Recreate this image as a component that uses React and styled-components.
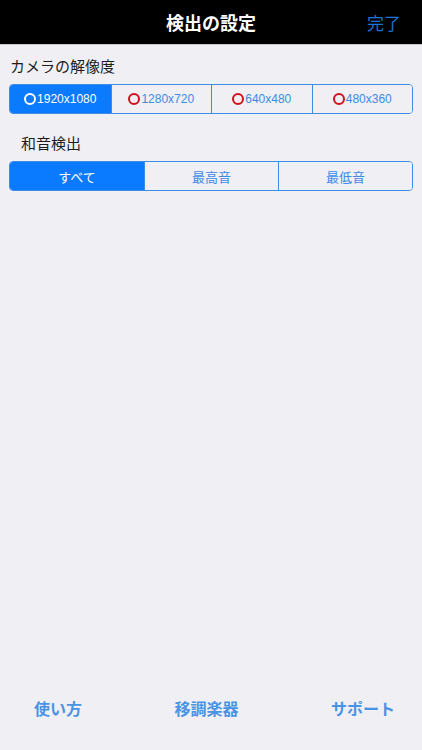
import React, { useState } from 'react';
import styled, { createGlobalStyle } from 'styled-components';

const GlobalStyle = createGlobalStyle`
    html, body {
        margin: 0;
        padding: 0;
        background: #efeff4;
    }

    body {
        font-family: "Liberation Sans", "Noto Sans CJK JP", sans-serif;
    }
`

const Page = styled.div`
    display: flex;
    flex-direction: column;
    width: 422px;
    height: 750px;
    background: #efeff4;
`

const NavBar = styled.header`
    display: grid;
    grid-template-columns: 1fr auto 1fr;
    align-items: center;
    height: 44px;
    background: #000;
    border-bottom: 1px solid #c8c8cc;
    flex-shrink: 0;
`

const NavTitle = styled.h1`
    grid-column: 2;
    margin: 0;
    font-family: "Noto Sans CJK JP", sans-serif;
    font-size: 18px;
    font-weight: 700;
    color: #fff;
`

const NavAction = styled.button`
    justify-self: end;
    margin-right: 21px;
    padding: 0;
    border: 0;
    background: none;
    font-family: "Noto Sans CJK JP", sans-serif;
    font-size: 17px;
    color: #1f72d6;
`

const Content = styled.main`
    flex: 1;
    display: flex;
    flex-direction: column;
    padding: 0 9px;
`

const SectionLabel = styled.div`
    padding-left: ${p => p.indent}px;
    margin-top: ${p => p.top}px;
    margin-bottom: 7px;
    font-family: "Noto Sans CJK JP", sans-serif;
    font-size: 15px;
    line-height: 22px;
    color: #1c1c1e;
`

const Segmented = styled.div`
    display: grid;
    grid-template-columns: repeat(${p => p.count}, 1fr);
    height: 30px;
    border: 1px solid #3f8be6;
    border-radius: 4px;
    overflow: hidden;
    box-sizing: border-box;
`

const Segment = styled.button`
    display: flex;
    align-items: center;
    justify-content: center;
    gap: 1px;
    padding: 0;
    border: 0;
    border-left: 1px solid #3f8be6;
    background: ${p => (p.active ? '#0a7aff' : '#efeff4')};
    color: ${p => (p.active ? '#fff' : '#3f8be6')};
    font-family: "Liberation Sans", "Noto Sans CJK JP", sans-serif;
    font-size: ${p => p.size}px;

    &:first-child {
        border-left: 0;
    }
`

const Ring = styled.span`
    width: 8px;
    height: 8px;
    border-radius: 50%;
    border: 2.3px solid ${p => (p.active ? '#fff' : '#d0101c')};
`

const Footer = styled.footer`
    display: flex;
    justify-content: space-between;
    align-items: center;
    height: 40px;
    margin-bottom: 22px;
    padding: 0 27px 0 34px;
`

const FooterLink = styled.button`
    padding: 0;
    border: 0;
    background: none;
    font-family: "Noto Sans CJK JP", sans-serif;
    font-size: 16px;
    font-weight: 700;
    color: #4a93e4;
`

const resolutions = ['1920x1080', '1280x720', '640x480', '480x360'];
const chordModes = ['すべて', '最高音', '最低音'];

const App = () => {
    const [res, setRes] = useState(0);
    const [mode, setMode] = useState(0);

    return (
        <Page>
            <GlobalStyle/>
            <NavBar>
                <NavTitle>検出の設定</NavTitle>
                <NavAction>完了</NavAction>
            </NavBar>

            <Content>
                <SectionLabel indent={1} top={10}>カメラの解像度</SectionLabel>
                <Segmented count={resolutions.length}>
                    {resolutions.map((r, i) => (
                        <Segment key={r} size={12} active={i === res} onClick={() => setRes(i)}>
                            <Ring active={i === res}/>
                            {r}
                        </Segment>
                    ))}
                </Segmented>

                <SectionLabel indent={12} top={18}>和音検出</SectionLabel>
                <Segmented count={chordModes.length}>
                    {chordModes.map((m, i) => (
                        <Segment key={m} size={13} active={i === mode} onClick={() => setMode(i)}>
                            {m}
                        </Segment>
                    ))}
                </Segmented>
            </Content>

            <Footer>
                <FooterLink>使い方</FooterLink>
                <FooterLink>移調楽器</FooterLink>
                <FooterLink>サポート</FooterLink>
            </Footer>
        </Page>
    )
}

export default App;
